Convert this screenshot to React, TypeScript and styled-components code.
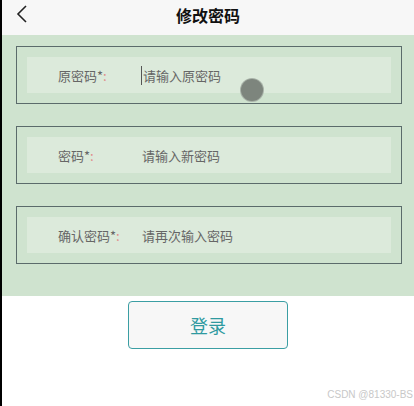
import styled, { createGlobalStyle } from "styled-components";

const GlobalStyle = createGlobalStyle`
  html, body {
    margin: 0;
    padding: 0;
    background: #ffffff;
  }
  body {
    font-family: "Liberation Sans", "Noto Sans CJK SC", sans-serif;
  }
`;

const Page = styled.div`
  position: relative;
  width: 414px;
  height: 406px;
  box-sizing: border-box;
  border-left: 2px solid #000;
  background: #fff;
  overflow: hidden;
`;

const Header = styled.div`
  position: relative;
  height: 35px;
  background: #f7f7f7;
  display: flex;
  align-items: center;
  justify-content: center;
`;

const BackBtn = styled.button`
  position: absolute;
  left: 10px;
  top: 3px;
  width: 20px;
  height: 22px;
  padding: 0;
  border: none;
  background: transparent;
  display: flex;
  align-items: center;
  justify-content: center;
`;

const Title = styled.h1`
  margin: 0;
  margin-top: -6px;
  font-size: 16px;
  font-weight: 700;
  color: #111;
  font-family: "Noto Sans CJK SC", sans-serif;
`;

const Form = styled.div`
  background: #cfe3cf;
  padding: 11px 12px 32px 14px;
  display: flex;
  flex-direction: column;
  gap: 22px;
`;

const Field = styled.div`
  height: 58px;
  border: 1px solid #5b6b6b;
  padding: 10px;
  box-sizing: border-box;
  display: flex;
`;

const Row = styled.label`
  flex: 1;
  background: #dceadb;
  display: flex;
  align-items: center;
  padding-left: 31px;
  font-family: "Noto Sans CJK SC", sans-serif;
  font-size: 13px;
  color: #666;
`;

const Label = styled.span<{ w: number }>`
  width: ${(p) => p.w}px;
  flex: none;
  white-space: nowrap;
`;

const Colon = styled.span`
  color: #e08a8a;
`;

const Input = styled.input<{ caret?: boolean }>`
  flex: 1;
  min-width: 0;
  border: none;
  outline: none;
  background: transparent;
  font-family: "Noto Sans CJK SC", sans-serif;
  font-size: 13px;
  color: #555;
  padding: 0;
  ${(p) => (p.caret ? "border-left: 1px solid #555; padding-left: 1px; margin-left: -1px;" : "")}
  &::placeholder {
    color: #666;
  }
`;

const Footer = styled.div`
  display: flex;
  justify-content: center;
  padding-top: 5px;
`;

const LoginBtn = styled.button`
  width: 160px;
  height: 48px;
  border: 1px solid #3b9ea3;
  border-radius: 4px;
  background: #f7f7f7;
  color: #2f9aa0;
  font-family: "Noto Sans CJK SC", sans-serif;
  font-size: 18px;
`;

const TouchDot = styled.div`
  position: absolute;
  left: 239px;
  top: 79px;
  width: 22px;
  height: 22px;
  border-radius: 50%;
  background: #7d857d;
  box-shadow: 0 0 0 1px #a8b2a8;
`;

const Watermark = styled.div`
  position: absolute;
  right: 1px;
  bottom: 6px;
  white-space: nowrap;
  font-size: 10px;
  color: #c8c8c8;
  font-family: "Liberation Sans", sans-serif;
`;

const fields = [
  { label: "原密码", w: 84, placeholder: "请输入原密码", caret: true },
  { label: "密码", w: 84, placeholder: "请输入新密码" },
  { label: "确认密码", w: 84, placeholder: "请再次输入密码" },
];

export default function App() {
  return (
    <>
      <GlobalStyle />
      <Page>
        <Header>
          <BackBtn aria-label="返回">
            <svg width="12" height="20" viewBox="0 0 12 20">
              <path d="M10 2 L2 10 L10 18" fill="none" stroke="#222" strokeWidth="1.6" />
            </svg>
          </BackBtn>
          <Title>修改密码</Title>
        </Header>
        <Form>
          {fields.map((f) => (
            <Field key={f.label}>
              <Row>
                <Label w={f.w}>
                  {f.label}*<Colon>:</Colon>
                </Label>
                <Input type="password" placeholder={f.placeholder} caret={f.caret} />
              </Row>
            </Field>
          ))}
        </Form>
        <Footer>
          <LoginBtn>登录</LoginBtn>
        </Footer>
        <TouchDot />
        <Watermark>CSDN @81330-BS</Watermark>
      </Page>
    </>
  );
}
